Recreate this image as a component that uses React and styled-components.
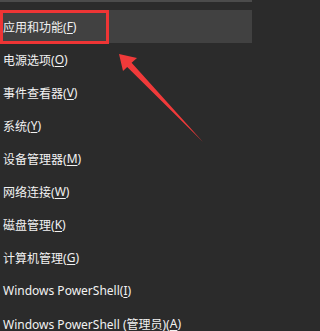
import React from 'react';
import styled, { createGlobalStyle } from 'styled-components';

const GlobalStyle = createGlobalStyle`
    html, body {
        margin: 0;
        padding: 0;
        background: #2b2b2b;
    }
`;

// 1. Wrapper
const MenuWrapper = styled.div`
    position: relative;
    width: 252px;
    height: 331px;
    overflow: hidden;
    background: #2b2b2b;
    border-top: 2px solid #4b4b4b;
    box-sizing: border-box;
    padding-top: 8px;
    font-family: 'Noto Sans', 'Noto Sans CJK SC', sans-serif;
`;

const MenuList = styled.ul`
    margin: 0;
    padding: 0;
    list-style: none;
`;

const MenuItem = styled.li`
    position: relative;
    display: flex;
    align-items: center;
    height: 33px;
    padding-left: 3px;
    font-size: 12px;
    color: #f2f2f2;
    background: ${(props) => (props.active ? '#414141' : 'transparent')};
    white-space: nowrap;
`;

const Key = styled.u`
    text-decoration: underline;
    text-underline-offset: 2px;
    text-decoration-thickness: 1px;
`;

// 2. Annotation (overlay)
const Highlight = styled.div`
    position: absolute;
    left: 0;
    top: 0;
    width: 109px;
    height: 34px;
    border: 3px solid #ee3535;
    box-sizing: border-box;
`;

const ArrowSvg = styled.svg`
    position: absolute;
    left: 0;
    top: 0;
    pointer-events: none;
`;

const items = [
    { label: '应用和功能', key: 'F' },
    { label: '电源选项', key: 'O' },
    { label: '事件查看器', key: 'V' },
    { label: '系统', key: 'Y' },
    { label: '设备管理器', key: 'M' },
    { label: '网络连接', key: 'W' },
    { label: '磁盘管理', key: 'K' },
    { label: '计算机管理', key: 'G' },
    { label: 'Windows PowerShell', key: 'I' },
    { label: 'Windows PowerShell (管理员)', key: 'A' },
];

const App = () => {
    return (
        <>
            <GlobalStyle />
            <MenuWrapper>
                <MenuList>
                    {items.map((item, i) => (
                        <MenuItem key={item.key} active={i === 0 ? 1 : 0}>
                            {i === 0 && <Highlight />}
                            {item.label}(<Key>{item.key}</Key>)
                        </MenuItem>
                    ))}
                </MenuList>
                <ArrowSvg width="252" height="331" viewBox="0 2 252 331">
                    <polygon
                        points="119,54 137,58 131.6,62.7 203,142 127.2,66.9 123,71"
                        fill="#f03a3a"
                    />
                </ArrowSvg>
            </MenuWrapper>
        </>
    );
};

export default App;
